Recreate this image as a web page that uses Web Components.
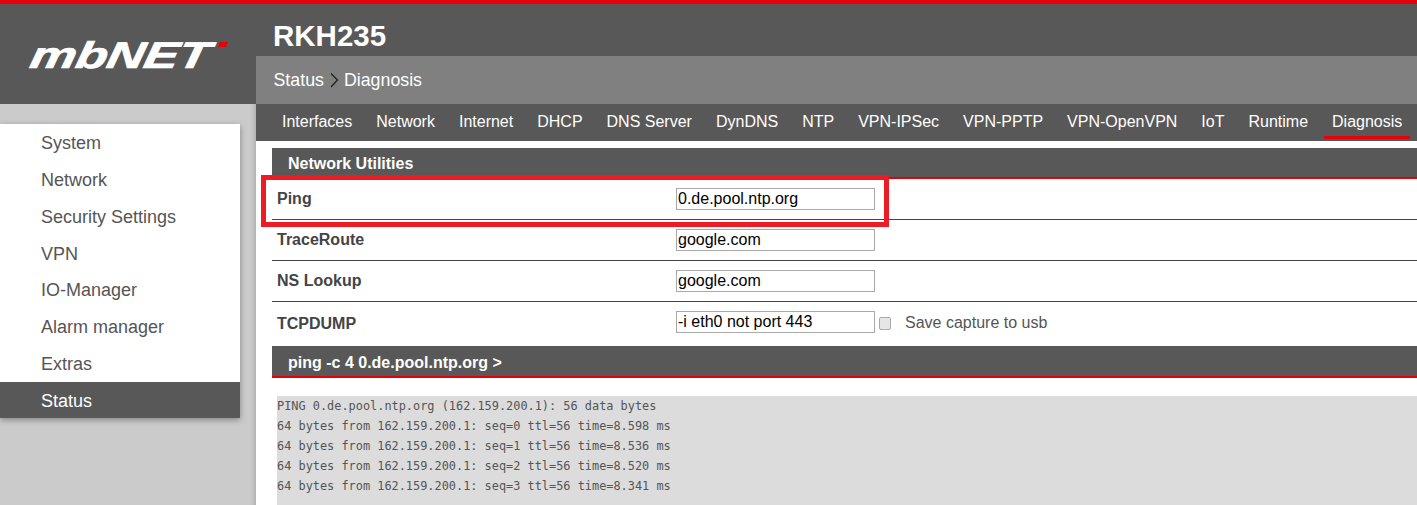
<!DOCTYPE html>
<html lang="en">
<head>
<meta charset="UTF-8">
<title>mbNET RKH235 - Diagnosis</title>
<style>
    html, body { height: 100%; }
    body { margin: 0; overflow: hidden; background: #fff; font-family: "Liberation Sans", Arial, sans-serif; }
</style>
</head>
<body>

<mb-app>
    <mb-logo slot="logo"></mb-logo>
    <mb-sidebar slot="nav">
        <mb-nav-item>System</mb-nav-item>
        <mb-nav-item>Network</mb-nav-item>
        <mb-nav-item>Security Settings</mb-nav-item>
        <mb-nav-item>VPN</mb-nav-item>
        <mb-nav-item>IO-Manager</mb-nav-item>
        <mb-nav-item>Alarm manager</mb-nav-item>
        <mb-nav-item>Extras</mb-nav-item>
        <mb-nav-item active>Status</mb-nav-item>
    </mb-sidebar>

    <mb-header slot="header" title="RKH235" section="Status" page="Diagnosis"></mb-header>

    <mb-tabs slot="header">
        <mb-tab>Interfaces</mb-tab>
        <mb-tab>Network</mb-tab>
        <mb-tab>Internet</mb-tab>
        <mb-tab>DHCP</mb-tab>
        <mb-tab>DNS Server</mb-tab>
        <mb-tab>DynDNS</mb-tab>
        <mb-tab>NTP</mb-tab>
        <mb-tab>VPN-IPSec</mb-tab>
        <mb-tab>VPN-PPTP</mb-tab>
        <mb-tab>VPN-OpenVPN</mb-tab>
        <mb-tab>IoT</mb-tab>
        <mb-tab>Runtime</mb-tab>
        <mb-tab active>Diagnosis</mb-tab>
    </mb-tabs>

    <mb-section-title>Network Utilities</mb-section-title>
    <mb-row label="Ping" value="0.de.pool.ntp.org"></mb-row>
    <mb-row label="TraceRoute" value="google.com"></mb-row>
    <mb-row label="NS Lookup" value="google.com"></mb-row>
    <mb-row label="TCPDUMP" value="-i eth0 not port 443" check="Save capture to usb" last></mb-row>
    <mb-section-title tall>ping -c 4 0.de.pool.ntp.org &gt;</mb-section-title>
    <mb-console>PING 0.de.pool.ntp.org (162.159.200.1): 56 data bytes
64 bytes from 162.159.200.1: seq=0 ttl=56 time=8.598 ms
64 bytes from 162.159.200.1: seq=1 ttl=56 time=8.536 ms
64 bytes from 162.159.200.1: seq=2 ttl=56 time=8.520 ms
64 bytes from 162.159.200.1: seq=3 ttl=56 time=8.341 ms
</mb-console>

    <mb-callout slot="overlay"></mb-callout>
</mb-app>

<script>
    // Helper: every component is a shadow root filled from a string
    class Base extends HTMLElement {
        constructor(html) {
            super();
            this.attachShadow({ mode: 'open' });
            this.shadowRoot.innerHTML = html;
        }
    }

    class MbApp extends Base {
        constructor() {
            super(`
                <style>
                    :host { display: grid; grid-template-columns: 256px 1fr; height: 505px; position: relative; overflow: hidden; border-top: 4px solid #e6000a; box-sizing: border-box; }
                    .left { background: #cbcbcb; display: flex; flex-direction: column; box-shadow: inset -6px 0 6px -6px rgba(0,0,0,.25); }
                    .right { display: flex; flex-direction: column; min-width: 0; }
                    .content { padding: 7px 0 0 16px; display: flex; flex-direction: column; }
                </style>
                <div class="left">
                    <slot name="logo"></slot>
                    <slot name="nav"></slot>
                </div>
                <div class="right">
                    <slot name="header"></slot>
                    <div class="content"><slot></slot></div>
                </div>
                <slot name="overlay"></slot>
            `);
        }
    }

    class MbLogo extends Base {
        constructor() {
            super(`
                <style>
                    :host { display: flex; align-items: center; height: 100px; background: #585858; padding-left: 31px; box-sizing: border-box; position: relative; }
                    .word { display: block; color: #fff; font: italic bold 37px/1 "Liberation Sans", sans-serif; -webkit-text-stroke: .7px #fff; transform: scaleX(1.4) skewX(-8deg); transform-origin: 0 50%; margin-top: 2px; letter-spacing: -.4px; }
                    .mark { position: absolute; left: 219px; top: 38px; width: 8px; height: 5px; background: #e6000a; transform: skewX(-24deg); }
                </style>
                <span class="word">mbNET</span><span class="mark"></span>
            `);
        }
    }

    class MbSidebar extends Base {
        constructor() {
            super(`
                <style>
                    :host { display: block; width: 240px; height: 294px; overflow: hidden; margin-top: 20px; background: #fff; box-shadow: 0 2px 6px rgba(0,0,0,.35); }
                </style>
                <slot></slot>
            `);
        }
    }

    class MbNavItem extends Base {
        constructor() {
            super(`
                <style>
                    :host { display: block; height: 36.86px; line-height: 38.5px; padding-left: 41px; font-size: 18px; color: #555; }
                    :host([active]) { background: #585858; color: #fff; }
                </style>
                <slot></slot>
            `);
        }
    }

    class MbHeader extends Base {
        constructor() {
            super(`
                <style>
                    :host { display: block; color: #fff; }
                    h1 { margin: 0; height: 52px; background: #585858; padding: 15px 0 0 17px; box-sizing: border-box; font-size: 29.5px; line-height: 34px; font-weight: bold; }
                    .crumb { height: 48px; background: #808080; padding-left: 17.5px; display: flex; align-items: center; font-size: 17.8px; }
                    svg { margin: 0 5px 0 5px; width: 10px; height: 16px; }
                </style>
                <h1></h1>
                <div class="crumb">
                    <span class="section"></span>
                    <svg viewBox="0 0 10 16"><path d="M2 1.5l6.5 6.500-6.500 7" fill="none" stroke="#1c1c1c" stroke-width="1.2"/></svg>
                    <span class="page"></span>
                </div>
            `);
        }
        connectedCallback() {
            this.shadowRoot.querySelector('h1').textContent = this.getAttribute('title');
            this.shadowRoot.querySelector('.section').textContent = this.getAttribute('section');
            this.shadowRoot.querySelector('.page').textContent = this.getAttribute('page');
        }
    }

    class MbTabs extends Base {
        constructor() {
            super(`
                <style>
                    :host { display: flex; height: 37px; background: #585858; padding-left: 18px; gap: 8px; }
                </style>
                <slot></slot>
            `);
        }
    }

    class MbTab extends Base {
        constructor() {
            super(`
                <style>
                    :host { display: block; height: 35px; line-height: 35px; padding: 0 8px; font-size: 16px; color: #fff; white-space: nowrap; }
                    :host([active]) { box-shadow: inset 0 -3px 0 #e6000a; }
                </style>
                <slot></slot>
            `);
        }
    }

    class MbSectionTitle extends Base {
        constructor() {
            super(`
                <style>
                    :host { display: block; height: 31px; line-height: 31px; background: #585858; border-bottom: 2px solid #e6000a; box-sizing: border-box; padding-left: 16px; font-size: 16px; font-weight: bold; color: #fff; }
                    :host([tall]) { height: 32px; line-height: 34px; }
                </style>
                <slot></slot>
            `);
        }
    }

    class MbRow extends Base {
        constructor() {
            super(`
                <style>
                    :host { display: grid; grid-template-columns: 404px 1fr; height: 41px; border-bottom: 1px solid #444; box-sizing: border-box; color: #444; font-size: 16px; }
                    :host([last]) { border-bottom: 0; height: 44px; }
                    .label { font-weight: bold; padding-left: 5px; line-height: 40px; }
                    :host([last]) .label { line-height: 44px; }
                    .field { display: flex; align-items: center; align-self: start; padding-top: 9px; }
                    input[type=text] { width: 199px; height: 22px; box-sizing: border-box; border: 1px solid #a9a9a9; padding: 0 1px; margin: 0; font: 16px "Liberation Sans", sans-serif; color: #000; background: #fff; outline: 0; }
                    input[type=checkbox] { appearance: none; width: 12px; height: 13px; box-sizing: border-box; margin: 3px 14px 0 4px; border: 1px solid #a9a9a9; border-radius: 2px; background: #e6e6e6; }
                    .check { color: #555; padding-top: 2px; }
                </style>
                <span class="label"></span>
                <span class="field"><input type="text" readonly></span>
            `);
        }
        connectedCallback() {
            this.shadowRoot.querySelector('.label').textContent = this.getAttribute('label');
            this.shadowRoot.querySelector('input').value = this.getAttribute('value');
            const check = this.getAttribute('check');
            if (check) {
                const box = document.createElement('input');
                box.type = 'checkbox';
                const text = document.createElement('span');
                text.className = 'check';
                text.textContent = check;
                this.shadowRoot.querySelector('.field').append(box, text);
            }
        }
    }

    class MbConsole extends Base {
        constructor() {
            super(`
                <style>
                    :host { display: block; margin: 18px 0 0 5px; background: #dcdcdc; height: 110px; }
                    pre { margin: 0; font: 11.9px/20px "DejaVu Sans Mono", monospace; color: #555; }
                </style>
                <pre><slot></slot></pre>
            `);
        }
    }

    // Red annotation frame drawn over the Ping row
    class MbCallout extends Base {
        constructor() {
            super(`
                <style>
                    :host { position: absolute; left: 261px; top: 171px; width: 628px; height: 52px; border: 5px solid #ed1c24; box-sizing: border-box; pointer-events: none; }
                </style>
            `);
        }
    }

    customElements.define('mb-app', MbApp);
    customElements.define('mb-logo', MbLogo);
    customElements.define('mb-sidebar', MbSidebar);
    customElements.define('mb-nav-item', MbNavItem);
    customElements.define('mb-header', MbHeader);
    customElements.define('mb-tabs', MbTabs);
    customElements.define('mb-tab', MbTab);
    customElements.define('mb-section-title', MbSectionTitle);
    customElements.define('mb-row', MbRow);
    customElements.define('mb-console', MbConsole);
    customElements.define('mb-callout', MbCallout);
</script>

</body>
</html>
